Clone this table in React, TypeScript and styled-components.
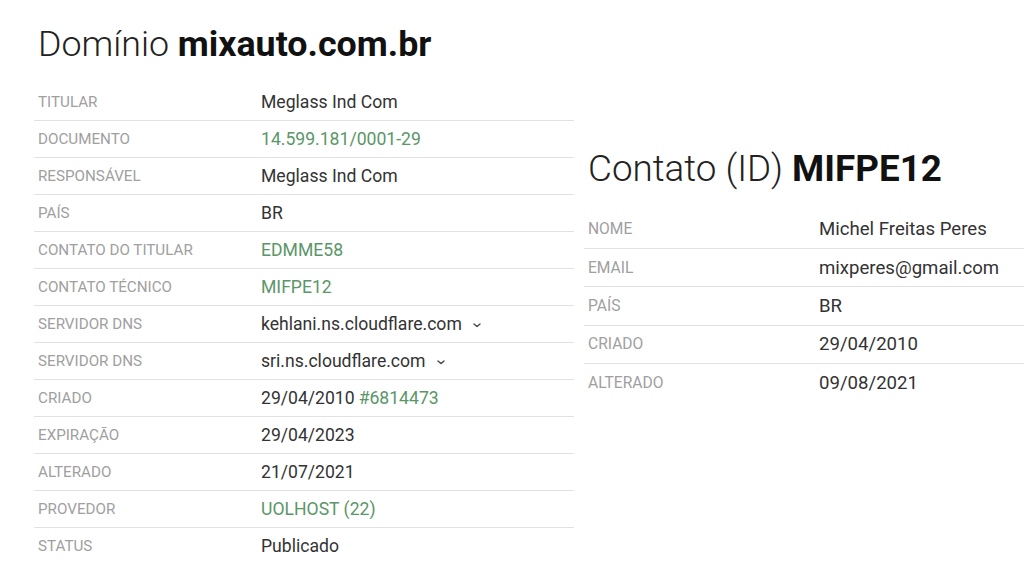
import React from "react";
import styled, { createGlobalStyle } from "styled-components";

const GlobalStyle = createGlobalStyle`
  html, body {
    margin: 0;
    padding: 0;
    background: #fff;
    overflow: hidden;
  }
  body {
    font-family: Roboto, "Liberation Sans", sans-serif;
    color: #333;
  }
`;

const Page = styled.div`
  display: flex;
  align-items: flex-start;
  gap: 10px;
  width: 1024px;
  height: 576px;
  padding-left: 34px;
  box-sizing: border-box;
  overflow: hidden;
`;

const Section = styled.section<{ $width: number; $top: number; $size: number }>`
  flex: 0 0 ${(p) => p.$width}px;
  padding-top: ${(p) => p.$top}px;

  h2 {
    font-size: ${(p) => p.$size}px;
  }
`;

const Title = styled.h2`
  margin: 0 0 0 4px;
  font-weight: 300;
  color: #222;
  line-height: 1;

  strong {
    font-weight: 700;
    color: #111;
  }
`;

const Table = styled.div<{ $gap: number }>`
  margin-top: ${(p) => p.$gap}px;
`;

const Row = styled.div<{ $height: number; $labelWidth: number }>`
  display: grid;
  grid-template-columns: ${(p) => p.$labelWidth}px 1fr;
  align-items: center;
  height: ${(p) => p.$height}px;
  border-bottom: 1px solid #e2e2e2;
  box-sizing: border-box;

  &:last-child {
    border-bottom: none;
  }
`;

const Label = styled.span<{ $size: number }>`
  padding-left: 4px;
  font-size: ${(p) => p.$size}px;
  color: #a0a0a0;
  text-transform: uppercase;
`;

const Value = styled.span<{ $size: number }>`
  font-size: ${(p) => p.$size}px;
  color: #333;
  display: flex;
  align-items: center;
  gap: 4px;
  white-space: nowrap;
`;

const Link = styled.span`
  color: #5a9668;
`;

const Chevron = () => (
  <svg width="12" height="12" viewBox="0 0 12 12" style={{ marginLeft: 5, marginTop: 2 }}>
    <path d="M3 5l3 2.5L9 5" fill="none" stroke="#444" strokeWidth="1.4" strokeLinecap="round" strokeLinejoin="round" />
  </svg>
);

type Item = { label: string; value: React.ReactNode };

const domain: Item[] = [
  { label: "Titular", value: "Meglass Ind Com" },
  { label: "Documento", value: <Link>14.599.181/0001-29</Link> },
  { label: "Responsável", value: "Meglass Ind Com" },
  { label: "País", value: "BR" },
  { label: "Contato do titular", value: <Link>EDMME58</Link> },
  { label: "Contato técnico", value: <Link>MIFPE12</Link> },
  { label: "Servidor DNS", value: <>kehlani.ns.cloudflare.com<Chevron /></> },
  { label: "Servidor DNS", value: <>sri.ns.cloudflare.com<Chevron /></> },
  { label: "Criado", value: <>29/04/2010 <Link>#6814473</Link></> },
  { label: "Expiração", value: "29/04/2023" },
  { label: "Alterado", value: "21/07/2021" },
  { label: "Provedor", value: <Link>UOLHOST (22)</Link> },
  { label: "Status", value: "Publicado" },
];

const contact: Item[] = [
  { label: "Nome", value: "Michel Freitas Peres" },
  { label: "Email", value: "mixperes@gmail.com" },
  { label: "País", value: "BR" },
  { label: "Criado", value: "29/04/2010" },
  { label: "Alterado", value: "09/08/2021" },
];

export default function App() {
  return (
    <>
      <GlobalStyle />
      <Page>
        <Section $width={540} $top={27} $size={35.8}>
          <Title>
            Domínio <strong>mixauto.com.br</strong>
          </Title>
          <Table $gap={21}>
            {domain.map((item, i) => (
              <Row key={i} $height={37} $labelWidth={227}>
                <Label $size={15.2}>{item.label}</Label>
                <Value $size={17.6}>{item.value}</Value>
              </Row>
            ))}
          </Table>
        </Section>
        <Section $width={563} $top={151} $size={36.8}>
          <Title>
            Contato (ID) <strong>MIFPE12</strong>
          </Title>
          <Table $gap={23}>
            {contact.map((item, i) => (
              <Row key={i} $height={38.3} $labelWidth={235}>
                <Label $size={15.6}>{item.label}</Label>
                <Value $size={18.6}>{item.value}</Value>
              </Row>
            ))}
          </Table>
        </Section>
      </Page>
    </>
  );
}
